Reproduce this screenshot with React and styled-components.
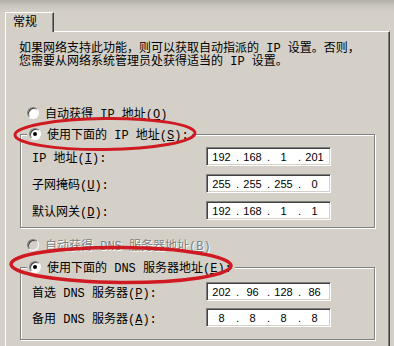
import React from 'react';
import styled, { createGlobalStyle } from 'styled-components';

const FACE = '#d4d0c8';
const TEXT_FONT = `"Liberation Mono", "Noto Sans CJK SC", monospace`;

const GlobalStyle = createGlobalStyle`
    body{
        margin : 0;
        background : ${FACE};
        font-family : ${TEXT_FONT};
        font-size : 12px;
        color : #000;
    }
`;

const Page = styled.div`
    position : relative;
    width : 394px;
    height : 346px;
    overflow : hidden;
    display : flex;
    flex-direction : column;
    background : ${FACE};
`;

const TopStrip = styled.div`
    height : 12px;
    background : linear-gradient(180deg, #b2afa8 0%, #c9c5be 45%, ${FACE} 100%);
`;

const TabRow = styled.div`
    display : flex;
    padding-left : 5px;
    height : 19px;
`;

const Tab = styled.div`
    position : relative;
    z-index : 1;
    width : 49px;
    height : 20px;
    box-sizing : border-box;
    background : ${FACE};
    border-left : 1px solid #fff;
    border-top : 1px solid #fff;
    border-right : 1px solid #404040;
    box-shadow : inset -1px 0 0 #808080;
    padding : 3px 0 0 7px;
    line-height : 14px;
`;

const Panel = styled.div`
    flex : 1;
    width : 385px;
    margin-left : 5px;
    box-sizing : border-box;
    border-top : 1px solid #fff;
    border-left : 1px solid #fff;
    border-right : 1px solid #404040;
    box-shadow : inset -1px 0 0 #808080;
    padding : 12px 0 0 14px;
`;

const Intro = styled.p`
    margin : -1px 0 0 -1px;
    line-height : 13px;
    white-space : nowrap;
`;

const RadioRow = styled.div`
    display : flex;
    align-items : center;
    gap : 6px;
    height : 16px;
    margin : ${p => p.$mt || 0}px 0 0 7px;
    white-space : nowrap;
    color : ${p => p.$disabled ? '#808080' : '#000'};
    text-shadow : ${p => p.$disabled ? '1px 1px 0 #fff' : 'none'};
`;

const RadioDot = styled.span`
    position : relative;
    flex : none;
    width : 12px;
    height : 12px;
    box-sizing : border-box;
    border-radius : 50%;
    border : 1px solid;
    border-color : #808080 #fff #fff #808080;
    background : ${p => p.$disabled ? FACE : '#fff'};
    box-shadow : inset 1px 1px 0 #404040;
    &::after{
        content : '';
        display : ${p => p.$checked ? 'block' : 'none'};
        position : absolute;
        left : 3px;
        top : 3px;
        width : 4px;
        height : 4px;
        border-radius : 50%;
        background : #000;
    }
`;

const Key = styled.span`
    text-decoration : underline;
`;

const Group = styled.fieldset`
    margin : ${p => p.$mt}px 0 0 0;
    width : 355px;
    min-width : 0;
    box-sizing : border-box;
    border : 1px solid #808080;
    box-shadow : inset 1px 1px 0 #fff, 1px 1px 0 #fff;
    padding : ${p => p.$pt}px 0 ${p => p.$pb}px 11px;
    display : flex;
    flex-direction : column;
    gap : ${p => p.$gap}px;
`;

const Legend = styled.legend`
    margin-left : -5px;
    padding : 0 3px 0 2px;
    background : ${FACE};
    display : flex;
    align-items : center;
    gap : 6px;
    height : 16px;
    white-space : nowrap;
`;

const FieldRow = styled.div`
    display : flex;
    align-items : center;
    height : 19px;
`;

const FieldLabel = styled.span`
    width : 174px;
    flex : none;
    white-space : nowrap;
`;

const IpBox = styled.div`
    display : flex;
    align-items : center;
    width : 125px;
    height : 19px;
    box-sizing : border-box;
    padding-left : 1px;
    background : #fff;
    border : 1px solid;
    border-color : #808080 #fff #fff #808080;
    box-shadow : inset 1px 1px 0 #404040, inset -1px -1px 0 ${FACE};
    font-family : "Liberation Sans", Arial, sans-serif;
    font-size : 11px;
`;

const Octet = styled.span`
    width : 27px;
    text-align : center;
`;

const Dot = styled.span`
    width : 4px;
    text-align : right;
`;

const Marks = styled.svg`
    position : absolute;
    left : 0;
    top : 0;
    pointer-events : none;
`;

const IpField = ({ value }) => {
    const parts = value.split('.');
    return (
        <IpBox>
            {parts.map((p, i) => (
                <React.Fragment key={i}>
                    {i > 0 && <Dot>.</Dot>}
                    <Octet>{p}</Octet>
                </React.Fragment>
            ))}
        </IpBox>
    );
};

const App = () => (
    <>
        <GlobalStyle />
        <Page>
            <TopStrip />
            <TabRow>
                <Tab>常规</Tab>
            </TabRow>
            <Panel>
                <Intro>
                    如果网络支持此功能，则可以获取自动指派的 IP 设置。否则，<br />
                    您需要从网络系统管理员处获得适当的 IP 设置。
                </Intro>

                <RadioRow $mt={36}>
                    <RadioDot />
                    <span>自动获得 IP 地址(<Key>O</Key>)</span>
                </RadioRow>

                <Group $mt={5} $pt={5} $pb={7} $gap={8}>
                    <Legend>
                        <RadioDot $checked />
                        <span>使用下面的 IP 地址(<Key>S</Key>):</span>
                    </Legend>
                    <FieldRow>
                        <FieldLabel>IP 地址(<Key>I</Key>):</FieldLabel>
                        <IpField value="192.168.1.201" />
                    </FieldRow>
                    <FieldRow>
                        <FieldLabel>子网掩码(<Key>U</Key>):</FieldLabel>
                        <IpField value="255.255.255.0" />
                    </FieldRow>
                    <FieldRow>
                        <FieldLabel>默认网关(<Key>D</Key>):</FieldLabel>
                        <IpField value="192.168.1.1" />
                    </FieldRow>
                </Group>

                <RadioRow $mt={9} $disabled>
                    <RadioDot $disabled />
                    <span>自动获得 DNS 服务器地址(<Key>B</Key>)</span>
                </RadioRow>

                <Group $mt={6} $pt={7} $pb={12} $gap={7}>
                    <Legend>
                        <RadioDot $checked />
                        <span>使用下面的 DNS 服务器地址(<Key>E</Key>):</span>
                    </Legend>
                    <FieldRow>
                        <FieldLabel>首选 DNS 服务器(<Key>P</Key>):</FieldLabel>
                        <IpField value="202.96.128.86" />
                    </FieldRow>
                    <FieldRow>
                        <FieldLabel>备用 DNS 服务器(<Key>A</Key>):</FieldLabel>
                        <IpField value="8.8.8.8" />
                    </FieldRow>
                </Group>
            </Panel>

            <Marks width="394" height="346" viewBox="0 0 394 346">
                <ellipse cx="105" cy="134" rx="90" ry="15.5" fill="none" stroke="#cf1a22" strokeWidth="3" transform="rotate(-0.6 105 134)" />
                <ellipse cx="121" cy="265" rx="110" ry="17.5" fill="none" stroke="#cf1a22" strokeWidth="3.5" transform="rotate(0.4 121 265)" />
            </Marks>
        </Page>
    </>
);

export default App;
